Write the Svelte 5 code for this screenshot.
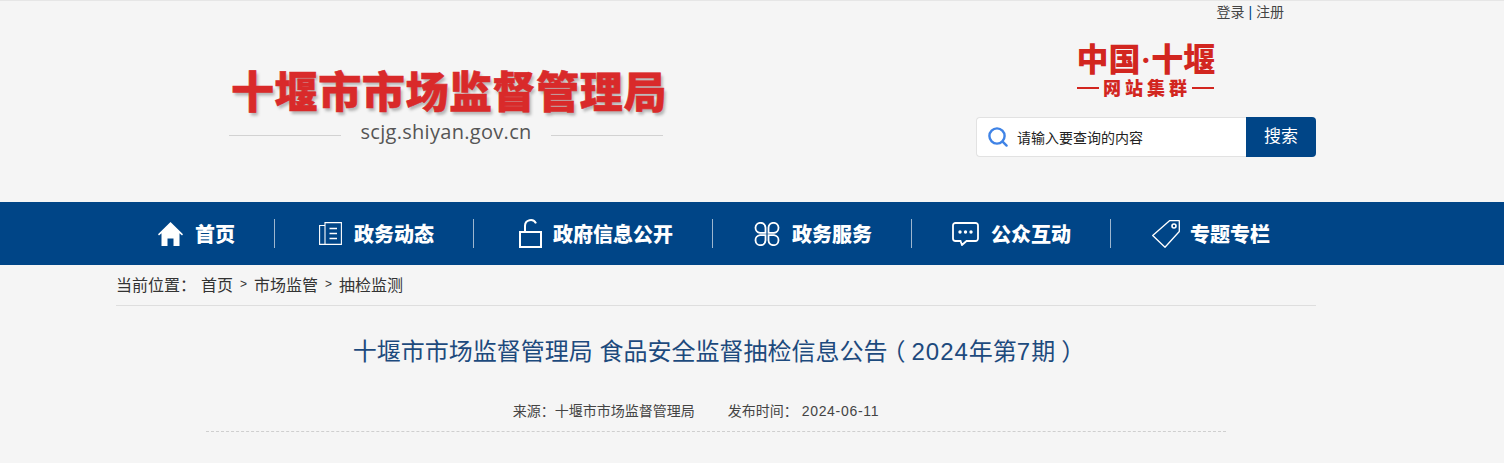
<script>
  const crumbs = ['首页', '市场监管', '抽检监测'];
</script>

<div class="page">
  <header class="head">
    <div class="logo">
      <div class="logo-name">十堰市市场监督管理局</div>
      <div class="logo-domain"><i></i><span>scjg.shiyan.gov.cn</span><i></i></div>
    </div>
    <div class="side">
      <div class="links">登录 <b>|</b> 注册</div>
      <div class="cluster">
        <div class="cluster-top">中国<span class="dot">·</span>十堰</div>
        <div class="cluster-sub"><i></i><span>网站集群</span><i></i></div>
      </div>
      <div class="search">
        <div class="field">
          <svg width="22" height="22" viewBox="0 0 22 22" fill="none" stroke="#3f83e6" stroke-width="2.4" stroke-linecap="round"><circle cx="10" cy="10" r="7.6"/><path d="M15.6 15.6 19.6 19.6"/></svg>
          <span>请输入要查询的内容</span>
        </div>
        <div class="btn">搜索</div>
      </div>
    </div>
  </header>

  <nav class="nav">
    <div class="nav-in">
      <div class="item first">
        <svg width="25" height="24" viewBox="0 0 25 24" fill="#fff"><path d="M12.5 0 25 12.2 24 13.4 21.5 11.2V24H15.5V16.5H9.5V24H3.5V11.2L1 13.4 0 12.2Z"/></svg>
        <span>首页</span>
      </div>
      <div class="item">
        <svg width="23" height="23" viewBox="0 0 23 23" fill="none" stroke="#fff" stroke-width="1.1"><path d="M6 3.5H.6V22.4H22.4V.6H6V22.4"/><path d="M10.5 6.5H18M10.5 11.5H18M10.5 16.5H18" stroke-width="1.5"/></svg>
        <span>政务动态</span>
      </div>
      <div class="item lock">
        <svg width="23" height="29" viewBox="0 0 23 29" fill="none" stroke="#fff" stroke-width="2"><rect x="1" y="13" width="21" height="15"/><path d="M6 13V7a5.8 5.8 0 0 1 11-2.6"/></svg>
        <span>政府信息公开</span>
      </div>
      <div class="item tight">
        <svg width="26" height="24" viewBox="0 0 26 24" fill="none" stroke="#fff" stroke-width="1.8"><path d="M11.5 10.8H6a5 5 0 1 1 5.5-5.2ZM14.5 10.8H20a5 5 0 1 0-5.500-5.200ZM11.500 13.200H6a5 5 0 1 0 5.500 5.200ZM14.500 13.200H20a5 5 0 1 1-5.500 5.200Z"/></svg>
        <span>政务服务</span>
      </div>
      <div class="item chat">
        <svg width="27" height="24" viewBox="0 0 27 24" fill="none" stroke="#fff" stroke-width="1.8"><path d="M3.500 1H23.500A2.500 2.500 0 0 1 26 3.500V16.500A2.500 2.500 0 0 1 23.500 19H14.500L10 23 8.500 19H3.500A2.500 2.500 0 0 1 1 16.500V3.500A2.500 2.500 0 0 1 3.500 1Z"/><g fill="#fff" stroke="none"><circle cx="8" cy="10" r="1.700"/><circle cx="13.500" cy="10" r="1.700"/><circle cx="19" cy="10" r="1.700"/></g></svg>
        <span>公众互动</span>
      </div>
      <div class="item tight last">
        <svg width="28" height="28" viewBox="0 0 28 28" fill="none" stroke="#fff" stroke-width="1.300"><path d="M17.500.7H27.300V11.500L13 27.300.7 15.500Z" stroke-linejoin="round"/><circle cx="22" cy="6" r="2" stroke-width="1.600"/></svg>
        <span>专题专栏</span>
      </div>
    </div>
  </nav>

  <main class="main">
    <div class="crumbs">
      <span class="lead">当前位置：</span>
      {#each crumbs as c, i}
        {#if i > 0}<span class="gt">&gt;</span>{/if}
        <span>{c}</span>
      {/each}
    </div>
    <h1 class="title">十堰市市场监督管理局 食品安全监督抽检信息公告<span class="paren">（</span><span class="num">2024</span>年第<span class="num">7</span>期<span class="paren">）</span></h1>
    <div class="meta">
      <span>来源：十堰市市场监督管理局</span>
      <span>发布时间： <span class="date">2024-06-11</span></span>
    </div>
  </main>
</div>

<style>
  :global(body) {
    margin: 0;
    background: #f5f5f5;
  }
  .page {
    font-family: "Liberation Sans", "Noto Sans CJK SC", sans-serif;
    color: #333;
    height: 463px;
    overflow: hidden;
    border-top: 1px solid #e6e6e6;
    box-sizing: border-box;
  }
  .head {
    width: 1200px;
    height: 201px;
    margin-left: 116px;
    display: flex;
    justify-content: space-between;
  }
  .logo {
    margin-left: 113px;
    width: 434px;
    padding-top: 59px;
  }
  .logo-name {
    font-family: "Noto Sans CJK SC", sans-serif;
    font-weight: 900;
    font-size: 43px;
    line-height: 58px;
    letter-spacing: 0.6px;
    color: #d92a2a;
    -webkit-text-stroke: 0.6px #d92a2a;
    white-space: nowrap;
    text-align: center;
    text-shadow: 2px 3px 3px #b5b5b5;
    padding-left: 2px;
  }
  .logo-domain {
    display: flex;
    align-items: center;
    justify-content: space-between;
    margin-top: 1px;
    font-family: "Open Sans", sans-serif;
    font-size: 20px;
    line-height: 26px;
    color: #555;
    letter-spacing: 0.3px;
  }
  .logo-domain i {
    display: block;
    width: 112px;
    height: 1px;
    background: #d2d2d2;
    margin-top: 7px;
  }
  .side {
    width: 340px;
    display: flex;
    flex-direction: column;
  }
  .links {
    margin-top: 3px;
    padding-right: 32px;
    text-align: right;
    font-size: 14px;
    line-height: 16px;
    color: #444;
  }
  .links b {
    font-weight: 400;
    color: #00468a;
  }
  .cluster {
    margin-top: 20px;
    align-self: center;
    width: 137px;
    color: #d2261f;
    font-family: "Noto Sans CJK SC", sans-serif;
    font-weight: 900;
    margin-left: -2px;
  }
  .cluster-top {
    font-size: 32px;
    line-height: 34px;
    text-align: center;
    white-space: nowrap;
  }
  .dot {
    font-family: "Liberation Serif", serif;
  }
  .cluster-sub {
    display: flex;
    align-items: center;
    justify-content: space-between;
    font-size: 18px;
    line-height: 21px;
  }
  .cluster-sub i {
    width: 22px;
    height: 2px;
    background: #d2261f;
  }
  .cluster-sub span {
    letter-spacing: 4px;
    margin-right: -4px;
    white-space: nowrap;
  }
  .search {
    margin-top: 19px;
    display: flex;
    height: 40px;
  }
  .field {
    width: 270px;
    box-sizing: border-box;
    background: #fff;
    border: 1px solid #e2e2e2;
    border-right: 0;
    border-radius: 4px 0 0 4px;
    display: flex;
    align-items: center;
    gap: 8px;
    padding-left: 10px;
    font-size: 14px;
    color: #222;
  }
  .btn {
    width: 70px;
    background: #004587;
    border-radius: 0 4px 4px 0;
    color: #fff;
    font-size: 17px;
    line-height: 40px;
    text-align: center;
  }
  .nav {
    height: 63px;
    background: #004587;
  }
  .nav-in {
    width: 1200px;
    height: 100%;
    margin-left: 116px;
    display: flex;
    align-items: center;
  }
  .item {
    height: 29px;
    display: flex;
    align-items: center;
    gap: 12px;
    padding: 0 39px 0 44px;
    border-right: 1px solid #9db6cf;
    color: #fff;
    font-family: "Noto Sans CJK SC", sans-serif;
    font-weight: 900;
    font-size: 20px;
    white-space: nowrap;
  }
  .item.first {
    padding-left: 42px;
  }
  .item.lock {
    padding-left: 45px;
    gap: 11px;
  }
  .item.tight {
    padding-left: 41px;
  }
  .item.chat {
    padding-left: 40px;
  }
  .item.last {
    gap: 10px;
    border-right: 0;
  }
  .main {
    width: 1200px;
    margin-left: 116px;
  }
  .crumbs {
    height: 41px;
    box-sizing: border-box;
    border-bottom: 1px solid #dedede;
    display: flex;
    align-items: center;
    gap: 7px;
    font-size: 16px;
    color: #333;
    padding-bottom: 2px;
  }
  .crumbs .lead {
    margin-right: -2px;
  }
  .gt {
    font-size: 12px;
  }
  .title {
    margin: 30px 0 0;
    font-weight: 400;
    font-size: 24px;
    line-height: 32px;
    color: #1d4a7d;
    text-align: center;
  }
  .paren {
    display: inline-block;
    width: 24px;
    text-align: center;
    font-feature-settings: "halt";
  }
  .num {
    letter-spacing: 1px;
  }
  .meta {
    width: 1020px;
    height: 30px;
    margin: 34px 0 0 90px;
    box-sizing: border-box;
    border-bottom: 1px dashed #cfcfcf;
    display: flex;
    justify-content: center;
    gap: 33px;
    font-size: 14px;
    line-height: 18px;
    padding-right: 40px;
    color: #444;
  }
  .date {
    letter-spacing: 0.7px;
  }
</style>
